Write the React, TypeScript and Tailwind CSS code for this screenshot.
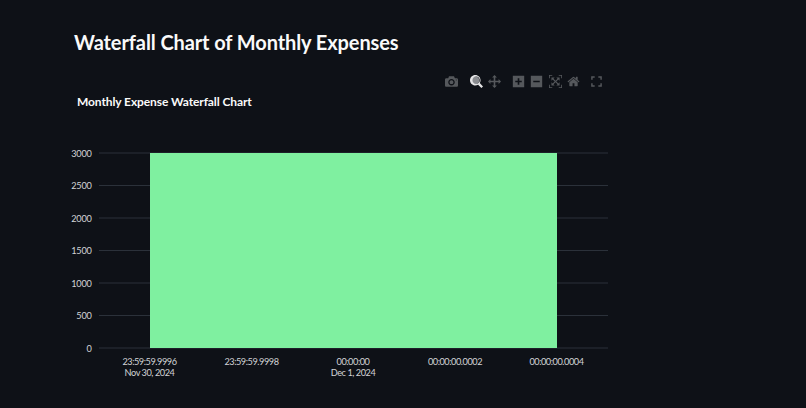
const sans = "font-['Lato','Noto_Sans',sans-serif]";

const ticksY = [
  { label: "3000", y: 153 },
  { label: "2500", y: 185.5 },
  { label: "2000", y: 218 },
  { label: "1500", y: 250.5 },
  { label: "1000", y: 283 },
  { label: "500", y: 315.5 },
  { label: "0", y: 348 },
];

const ticksX = [
  { x: 150, lines: ["23:59:59.9996", "Nov 30, 2024"] },
  { x: 252, lines: ["23:59:59.9998"] },
  { x: 353.5, lines: ["00:00:00", "Dec 1, 2024"] },
  { x: 455.5, lines: ["00:00:00.0002"] },
  { x: 557, lines: ["00:00:00.0004"] },
];

// plotly modebar glyphs, all drawn in a 1000 unit box with the y axis flipped
const icons = [
  { name: "camera", w: 1000, d: "m500 450c-83 0-150-67-150-150 0-83 67-150 150-150 83 0 150 67 150 150 0 83-67 150-150 150z m400 150h-120c-16 0-34 13-39 29l-31 93c-6 15-23 28-40 28h-340c-16 0-34-13-39-28l-31-94c-6-15-23-28-40-28h-120c-55 0-100-45-100-100v-450c0-55 45-100 100-100h800c55 0 100 45 100 100v450c0 55-45 100-100 100z m-400-550c-138 0-250 112-250 250 0 138 112 250 250 250 138 0 250-112 250-250 0-138-112-250-250-250z m365 380c-19 0-35 16-35 35 0 19 16 35 35 35 19 0 35-16 35-35 0-19-16-35-35-35z", mr: "mr-[12px]" },
  { name: "zoom", w: 1000, d: "m1000-25l-250 251c40 63 63 138 63 218 0 224-182 406-407 406-224 0-406-182-406-406s183-406 407-406c80 0 155 22 218 62l250-250 125 125z m-812 469c0 156 126 282 282 282s282-126 282-282-126-282-282-282-282 126-282 282z", mr: "mr-[5px]", active: true },
  { name: "pan", w: 1000, d: "m1000 350l-187 188 0-125-250 0 0 250 125 0-188 187-187-187 125 0 0-250-250 0 0 125-188-188 186-187 0 125 252 0 0-250-125 0 187-188 188 188-125 0 0 250 250 0 0-126 187 188z", mr: "mr-[11px]" },
  { name: "plus", w: 875, d: "m1 787l0-875 875 0 0 875-875 0z m687-500l-187 0 0-187-125 0 0 187-188 0 0 125 188 0 0 187 125 0 0-187 187 0 0-125z", mr: "mr-[5px]" },
  { name: "minus", w: 875, d: "m0 788l0-876 875 0 0 876-875 0z m688-500l-500 0 0 125 500 0 0-125z", mr: "mr-[6px]" },
  { name: "autoscale", w: 1000, d: "m250 850l-187 0-63 0 0-62 0-188 63 0 0 188 187 0 0 62z m688 0l-188 0 0-62 188 0 0-188 62 0 0 188 0 62-62 0z m-875-938l0 188-63 0 0-188 0-62 63 0 187 0 0 62-187 0z m875 188l0-188-188 0 0-62 188 0 62 0 0 62 0 188-62 0z m-125 188l-1 0-93-94-156 156 156 156 92-93 2 0 0 250-250 0 0-2 93-92-156-156-156 156 94 92 0 2-250 0 0-250 0 0 93 93 157-156-157-156-93 94 0 0 0-250 250 0 0 0-94 93 156 157 156-157-93-93 0 0 250 0 0 250z", mr: "mr-[5px]" },
  { name: "home", w: 928.6, d: "m786 296v-267q0-15-11-26t-25-10h-214v214h-143v-214h-214q-15 0-25 10t-11 26v267q0 1 0 2t0 2l321 264 321-264q1-1 1-4z m124 39l-34-41q-5-5-12-6h-2q-7 0-12 3l-386 322-386-322q-7-4-13-4-7 2-12 7l-35 41q-4 5-3 13t6 12l401 334q18 15 42 15t43-15l136-114v109q0 8 5 13t13 5h107q8 0 13-5t5-13v-227l122-102q5-5 6-12t-4-13z", mr: "mr-[11px]" },
];

function ModeIcon({ name, w, d, active, mr }: { name: string; w: number; d: string; active?: boolean; mr: string }) {
  return (
    <svg viewBox={`0 0 ${w} 1000`} className={`h-[13px] w-[13px] ${mr} ${active ? "fill-[#e4e4e5]" : "fill-[#55585c]"}`}>
      <g transform="matrix(1 0 0 -1 0 850)">
        {/* lens of the active zoom tool reads as a grey disc, not a see-through ring */}
        {name === "zoom" && <circle cx={406} cy={444} r={300} fill="#8a8c90" />}
        <path d={d} />
      </g>
    </svg>
  );
}

function Fullscreen() {
  return (
    <svg viewBox="0 0 12 12" className="h-[11px] w-[11px] fill-none stroke-[#55585c] stroke-[1.6]">
      <path d="M1 4V1h3M8 1h3v3M11 8v3H8M4 11H1V8" />
    </svg>
  );
}

function Chart() {
  return (
    <svg width={806} height={299} viewBox="0 109 806 299" className="block">
      {ticksY.map((t) => (
        <g key={t.label}>
          <line x1={99} x2={608} y1={t.y} y2={t.y} stroke="#2b313a" strokeWidth={1} />
          <text x={91.7} y={t.y + 3.5} textAnchor="end" fontSize={9.2} letterSpacing={-0.2} fill="#d2d3d6">
            {t.label}
          </text>
        </g>
      ))}
      <rect x={150} y={153} width={407} height={195} fill="#7ff0a0" />
      {ticksX.map((t) =>
        t.lines.map((line, i) => (
          <text key={line} x={t.x - 0.5} y={364.5 + i * 11.7} textAnchor="middle" fontSize={9.2} letterSpacing={-0.45} fill="#d2d3d6">
            {line}
          </text>
        ))
      )}
    </svg>
  );
}

export default function App() {
  return (
    <div className={`h-[408px] w-[806px] overflow-hidden bg-[#0e1117] ${sans}`}>
      <h1 className="pl-[74px] pt-[27px] text-[20px] font-bold leading-[30px] tracking-[-0.1px] text-[#fafafa]">
        Waterfall Chart of Monthly Expenses
      </h1>
      <div className="mt-[18px] flex h-[13px] items-center pl-[445px]">
        {icons.map((ic) => (
          <ModeIcon key={ic.name} name={ic.name} w={ic.w} d={ic.d} active={ic.active} mr={ic.mr} />
        ))}
        <Fullscreen />
      </div>
      <h2 className="mt-[7px] h-[14px] pl-[77px] text-[12px] font-bold leading-[14px] tracking-[-0.1px] text-[#fafafa]">
        Monthly Expense Waterfall Chart
      </h2>
      <Chart />
    </div>
  );
}
